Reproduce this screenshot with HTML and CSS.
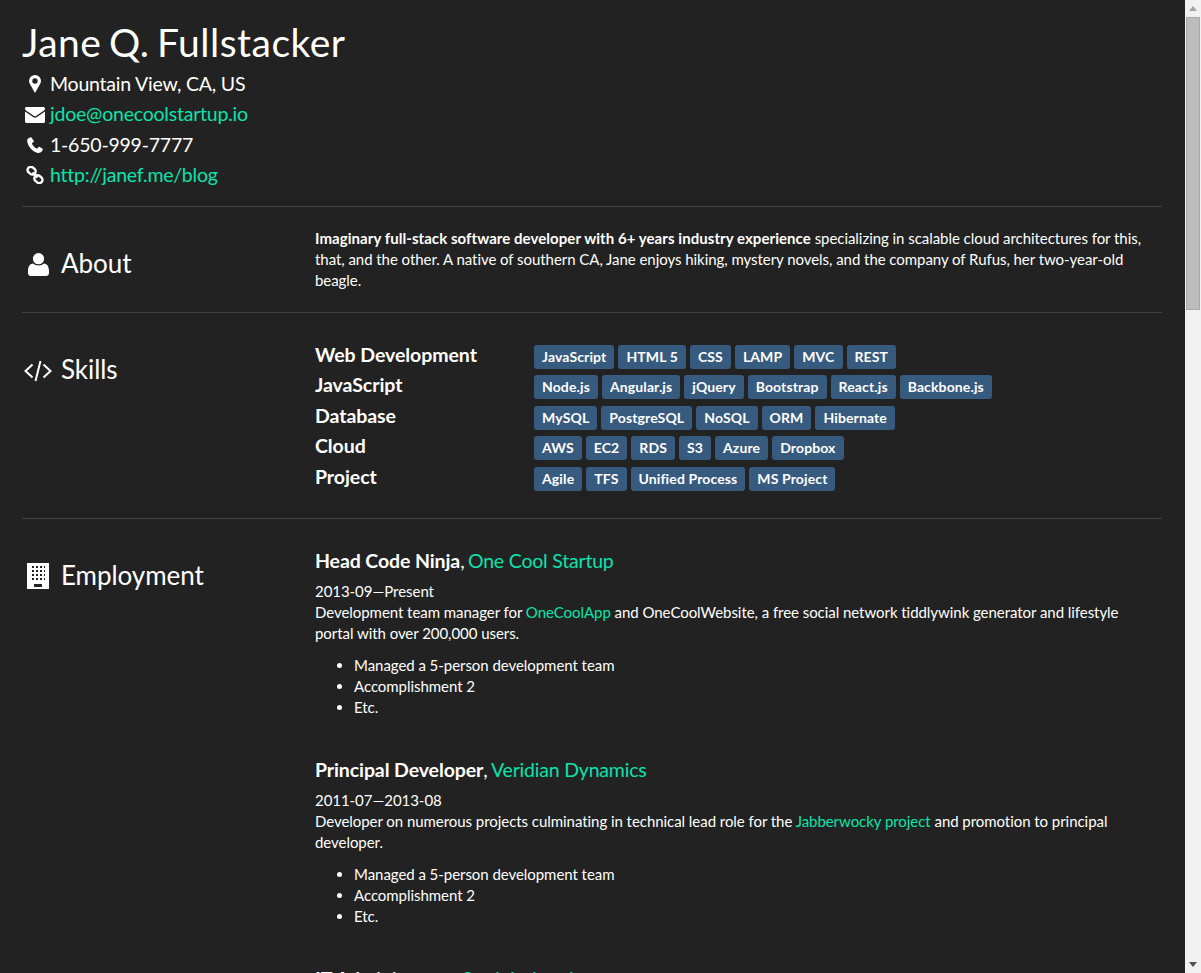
FILE: index.html
```html
<!DOCTYPE html>
<html lang="en">
<head>
<meta charset="utf-8">
<title>Jane Q. Fullstacker</title>
<link rel="stylesheet" href="styles.css">
</head>
<body>
<div class="page">
<main class="resume">
  <header class="masthead">
    <h1>Jane Q. Fullstacker</h1>
    <ul class="contact">
      <li><span class="cicon"><svg width="12" height="18" viewBox="0 0 12 18"><path fill="#fff" fill-rule="evenodd" d="M6 0a6 6 0 0 0-6 6c0 1.200.4 2.100.9 3.100L6 18l5.100-8.900c.5-1 .9-1.900.9-3.100a6 6 0 0 0-6-6zm0 3.300a2.700 2.700 0 1 1 0 5.400 2.700 2.700 0 0 1 0-5.400z"/></svg></span>Mountain View, CA, US</li>
      <li><span class="cicon"><svg width="20" height="16" viewBox="0 0 20 16"><path fill="#fff" d="M1.500 0h17C19.300 0 20 .7 20 1.500c0 .9-.6 1.700-1.300 2.200L11 9c-.6.400-1.400.400-2 0L1.300 3.700C.6 3.200 0 2.400 0 1.500 0 .7.700 0 1.500 0zM0 4.500l8.400 5.800c1 .6 2.200.6 3.200 0L20 4.500v10c0 .8-.7 1.500-1.500 1.500h-17C.7 16 0 15.300 0 14.500z"/></svg></span><a href="#">jdoe@onecoolstartup.io</a></li>
      <li><span class="cicon"><svg width="16" height="16" viewBox="0 0 16 16"><path fill="#fff" d="M3.600.3 1.500 1.300C.4 2 0 3.300.3 5c.6 2.700 2.100 5.400 4.300 7.600 1.500 1.400 3.300 2.600 5.300 3.100 1.900.5 3.700.1 5-1.500.5-.6.900-1.300 1-1.900.1-.3-.1-.5-.3-.6l-3.200-1.900c-.3-.1-.5-.1-.7.100l-1.300 1.500c-.2.200-.4.200-.7.100-2.100-.9-3.800-2.700-4.700-4.800-.1-.3 0-.5.200-.7l1.500-1.200c.2-.2.300-.5.200-.7L4.400.6C4.200.2 3.900.1 3.600.3z"/></svg></span>1-650-999-7777</li>
      <li><span class="cicon"><svg width="18" height="18" viewBox="0 0 18 18"><g fill="none" stroke="#fff" stroke-width="2.400"><rect x="1.300" y="1.500" width="8.600" height="6.400" rx="3.200" transform="rotate(40 5.600 4.700)"/><rect x="8.100" y="10" width="8.600" height="6.400" rx="3.200" transform="rotate(40 12.400 13.200)"/></g><path stroke="#fff" stroke-width="2.400" d="M6.500 6.500l5 5"/></svg></span><a href="#">http://janef.me/blog</a></li>
    </ul>
  </header>

  <section class="row row-about">
    <h2><span class="hicon"><svg width="21" height="23" viewBox="0 0 21 23"><path fill="#fff" d="M10.500 0a5.600 5.600 0 0 1 5.600 5.700 5.600 5.600 0 0 1-11.200 0A5.600 5.600 0 0 1 10.500 0zM5 10.500c1.300 1.300 3.300 2 5.500 2s4.200-.7 5.500-2c3.200.3 5 3 5 7.500V20c0 1.800-1.300 3-3 3H3c-1.700 0-3-1.200-3-3v-2c0-4.500 1.800-7.200 5-7.500z"/></svg></span>About</h2>
    <p class="about"><strong>Imaginary full-stack software developer with 6+ years industry experience</strong> specializing in scalable cloud architectures for this, that, and the other. A native of southern CA, Jane enjoys hiking, mystery novels, and the company of Rufus, her two-year-old beagle.</p>
  </section>

  <section class="row row-skills">
    <h2><span class="hicon"><svg width="28" height="22" viewBox="0 0 28 22"><path fill="none" stroke="#fff" stroke-width="2" d="M8.500 4.500 1.500 11l7 6.500M19.500 4.500l7 6.500-7 6.500M16.500 1l-5 20"/></svg></span>Skills</h2>
    <div class="skills">
      <div class="skill"><h3>Web Development</h3><div class="tags"><span>JavaScript</span><span>HTML 5</span><span>CSS</span><span>LAMP</span><span>MVC</span><span>REST</span></div></div>
      <div class="skill"><h3>JavaScript</h3><div class="tags"><span>Node.js</span><span>Angular.js</span><span>jQuery</span><span>Bootstrap</span><span>React.js</span><span>Backbone.js</span></div></div>
      <div class="skill"><h3>Database</h3><div class="tags"><span>MySQL</span><span>PostgreSQL</span><span>NoSQL</span><span>ORM</span><span>Hibernate</span></div></div>
      <div class="skill"><h3>Cloud</h3><div class="tags"><span>AWS</span><span>EC2</span><span>RDS</span><span>S3</span><span>Azure</span><span>Dropbox</span></div></div>
      <div class="skill"><h3>Project</h3><div class="tags"><span>Agile</span><span>TFS</span><span>Unified Process</span><span>MS Project</span></div></div>
    </div>
  </section>

  <section class="row row-work">
    <h2><span class="hicon"><svg width="22" height="26" viewBox="0 0 22 26"><path fill="#fff" fill-rule="evenodd" d="M0 0h22v26H0zM5 3v2h2V3zm4 0v2h2V3zm4 0v2h2V3zm4 0v2h1V3zM5 7v2h2V7zm4 0v2h2V7zm4 0v2h2V7zm4 0v2h1V7zM5 11v2h2v-2zm4 0v2h2v-2zm4 0v2h2v-2zm4 0v2h1v-2zM5 15v2h2v-2zm4 0v2h2v-2zm4 0v2h2v-2zm4 0v2h1v-2zM7 21v3h8v-3z"/></svg></span>Employment</h2>
    <div class="jobs">
      <article class="job">
        <h3>Head Code Ninja<span class="comma">, </span><a href="#">One Cool Startup</a></h3>
        <p>2013-09—Present<br>Development team manager for <a href="#">OneCoolApp</a> and OneCoolWebsite, a free social network tiddlywink generator and lifestyle portal with over 200,000 users.</p>
        <ul><li>Managed a 5-person development team</li><li>Accomplishment 2</li><li>Etc.</li></ul>
      </article>
      <article class="job">
        <h3>Principal Developer<span class="comma">, </span><a href="#">Veridian Dynamics</a></h3>
        <p>2011-07—2013-08<br>Developer on numerous projects culminating in technical lead role for the <a href="#">Jabberwocky project</a> and promotion to principal developer.</p>
        <ul><li>Managed a 5-person development team</li><li>Accomplishment 2</li><li>Etc.</li></ul>
      </article>
      <article class="job">
        <h3>IT Administrator<span class="comma">, </span><a href="#">Stark Industries</a></h3>
      </article>
    </div>
  </section>
</main>
<aside class="scrollbar" aria-hidden="true">
  <div class="arrow arrow-up"></div>
  <div class="track"><div class="thumb"></div></div>
  <div class="arrow arrow-down"></div>
</aside>
</div>
</body>
</html>
```
FILE: styles.css
```css
* { box-sizing: border-box; }
html, body { margin: 0; height: 100%; overflow: hidden; }
body { background: #222; color: #fff; font: 15px/21px Lato, "Liberation Sans", sans-serif; letter-spacing: -0.05px; }
a { color: #0ce3ac; text-decoration: none; }
.page { display: flex; height: 973px; }
.resume { flex: 1; min-width: 0; height: 973px; overflow: hidden; padding: 0 23px 0 22px; }
.masthead { padding-top: 21px; padding-bottom: 15px; }
h1 { margin: 0 0 5px; font-size: 39px; line-height: 43px; font-weight: 400; letter-spacing: 0.5px; word-spacing: -3px; }
.contact { list-style: none; margin: 0; padding: 0; font-size: 19.5px; line-height: 30.4px; height: 122px; letter-spacing: -0.22px; }
.contact li { display: flex; align-items: center; }
.cicon { width: 28px; display: flex; justify-content: center; padding-right: 3px; }
.row { display: grid; grid-template-columns: 293px 1fr; border-top: 1px solid #444; }
.row h2 { margin: 0; font-size: 26px; line-height: 30px; font-weight: 400; display: flex; align-items: center; align-self: start; }
.hicon { width: 39px; display: flex; justify-content: center; padding-right: 7px; padding-top: 2px; }
.row-about { padding-bottom: 21px; padding-top: 21px; }
.row-about h2 { padding-top: 20px; }
.about { margin: 0; }
.about strong { letter-spacing: 0.06px; }
.row-skills { padding-top: 27px; padding-bottom: 26px; }
.row-skills h2 { padding-top: 14px; }
.row-skills .hicon { padding-top: 4px; }
.skills { height: 152px; }
.skill { display: flex; height: 30.4px; align-items: flex-start; }
.skill h3 { margin: 0; width: 219px; font-size: 19.5px; line-height: 30.4px; font-weight: 700; letter-spacing: -0.06px; }
.tags { display: flex; gap: 4px; padding-top: 5px; }
.tags span { background: #375a7f; color: #fff; font-weight: 700; font-size: 14px; line-height: 14px; padding: 5px 8px 5px; border-radius: 3px; height: 24px; letter-spacing: 0.12px; }
.row-work { padding-top: 30px; }
.row-work h2 { padding-top: 11px; }
.jobs { padding-right: 8px; }
.job { padding-bottom: 29px; }
.job h3 { margin: 0 0 8px; font-size: 19.5px; line-height: 24px; font-weight: 700; letter-spacing: -0.1px; }
.job h3 a { font-weight: 400; letter-spacing: -0.2px; }
.comma { font-weight: 400; letter-spacing: -0.8px; }
.job p { margin: 0 0 11px; }
.job ul { margin: 0 0 11px; padding-left: 39px; }
.scrollbar { width: 16px; height: 973px; background: #f1f1f1; display: flex; flex-direction: column; flex: none; }
.arrow { height: 17px; flex: none; position: relative; }
.arrow::after { content: ""; position: absolute; left: 4px; width: 0; height: 0; border-left: 4px solid transparent; border-right: 4px solid transparent; }
.arrow-up::after { top: 6px; border-bottom: 5px solid #a3a3a3; }
.arrow-down::after { bottom: 6px; border-top: 5px solid #505050; }
.track { flex: 1; }
.thumb { width: 14px; height: 293px; margin-left: 1px; background: #bcbcbc; border: 1px solid #a8a8a8; }
```
